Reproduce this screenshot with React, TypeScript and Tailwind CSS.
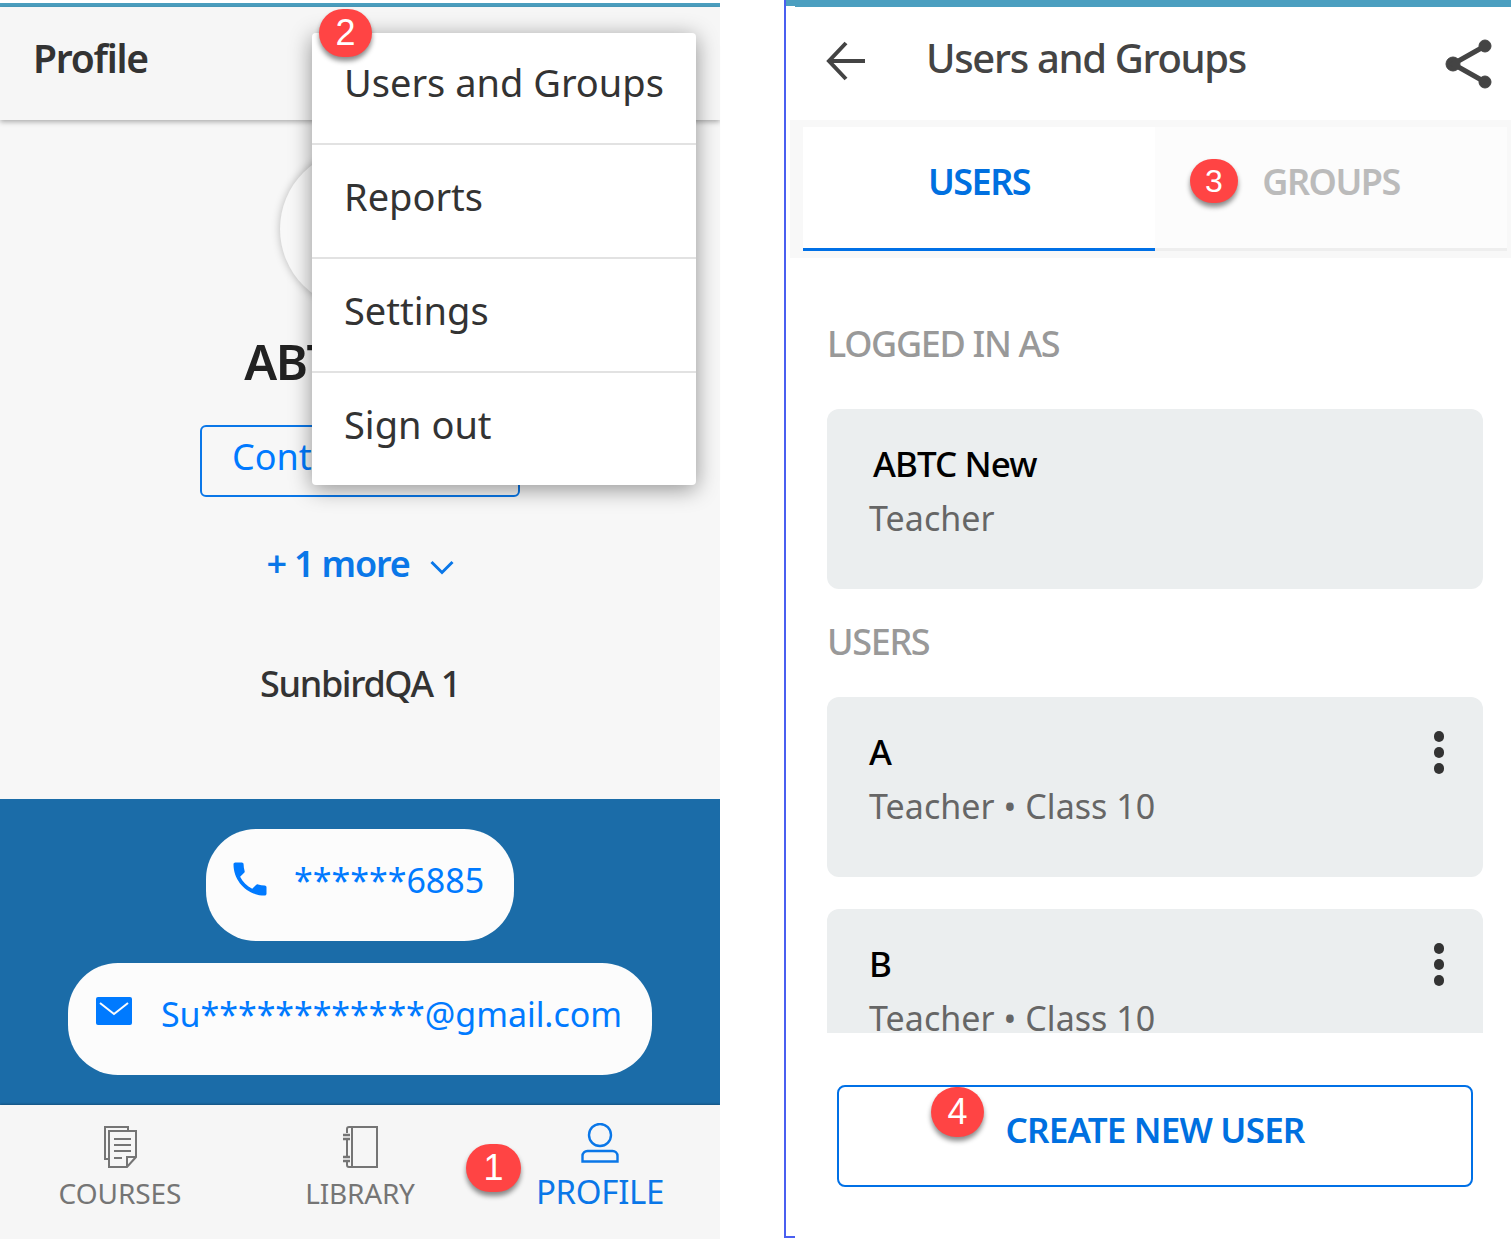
const Badge = ({ n, className }: { n: number; className: string }) => (
  <div className={`absolute flex items-center justify-center rounded-full bg-[#ff4444] text-white font-['Liberation_Sans',sans-serif] shadow-[0_4px_5px_rgba(0,0,0,0.45)] ${className}`}>
    {n}
  </div>
)

const CoursesIcon = () => (
  <svg width="34" height="42" viewBox="0 0 34 42" fill="none" stroke="#757575" strokeWidth="2">
    <path d="M25 4V1H2v32h4" />
    <path d="M6 5h27v26l-9 10H6z" />
    <path d="M33 31h-9v10" />
    <path d="M11 13h17M11 19h17M11 25h17M11 32h8" strokeWidth="2.2" />
  </svg>
)

const LibraryIcon = () => (
  <svg width="36" height="42" viewBox="0 0 36 42" fill="none" stroke="#757575" strokeWidth="2">
    <path d="M5 7V3a2 2 0 0 1 2-2h28v40H7a2 2 0 0 1-2-2v-4" />
    <path d="M5 13v18M10 1v40" />
    <path d="M1 9h7M1 13h7M1 31h7M1 35h7" strokeWidth="2.5" />
  </svg>
)

const ProfileIcon = () => (
  <svg width="38" height="40" viewBox="0 0 38 40" fill="none" stroke="#0a77e8" strokeWidth="2.4">
    <ellipse cx="19" cy="12" rx="11" ry="11" />
    <path d="M1.5 38.5V33a5 5 0 0 1 5-5h25a5 5 0 0 1 5 5v5.5z" />
  </svg>
)

const DotsIcon = () => (
  <div className="flex flex-col gap-[5px]">
    <div className="w-[10px] h-[11px] rounded-full bg-[#333]" />
    <div className="w-[10px] h-[11px] rounded-full bg-[#333]" />
    <div className="w-[10px] h-[11px] rounded-full bg-[#333]" />
  </div>
)

const UserCard = ({ name, sub, menu, className }: { name: string; sub: string; menu?: boolean; className: string }) => (
  <div className={`relative bg-[#ebeeef] rounded-t-[12px] overflow-hidden pl-[42px] pt-[34px] ${className}`}>
    <div className="text-[35px] leading-[42px] font-medium text-black tracking-[-0.9px]">{name}</div>
    <div className="text-[34px] leading-[46px] mt-[10px] text-[#666] tracking-[0.05px]">{sub}</div>
    {menu && (
      <div className="absolute right-[39px] top-[34px]">
        <DotsIcon />
      </div>
    )}
  </div>
)

export default function App() {
  return (
    <div className="relative w-[1511px] h-[1240px] bg-white font-['Noto_Sans',sans-serif] overflow-hidden flex">
      {/* Profile screen */}
      <div className="w-[720px] h-[1239px] pt-[3px] flex flex-col overflow-hidden">
        <div className="h-[4px] bg-[#4b9fc0]" />
        <div className="relative z-10 h-[113px] bg-[#f6f6f6] shadow-[0_2px_5px_rgba(0,0,0,0.3)] pl-[33px] pt-[26px]">
          <div className="text-[39px] leading-[50px] font-semibold text-[#333] tracking-[-1.25px]">Profile</div>
        </div>
        <div className="h-[679px] bg-[#f7f7f7] flex flex-col items-center">
          <div className="w-[160px] h-[160px] mt-[29px] rounded-full bg-[#f8f8f8] shadow-[0_0_8px_rgba(0,0,0,0.25)] shrink-0" />
          <div className="mt-[22px] text-[49px] leading-[60px] font-semibold text-[#222] tracking-[-1.5px]">ABTC New</div>
          <div className="mt-[34px] w-[320px] h-[72px] border-2 border-[#0a77e8] rounded-[6px] pl-[30px] pb-[9px] flex items-center text-[36px] text-[#007aff]">
            Content
          </div>
          <div className="mt-[42px] flex items-center text-[36px] leading-[50px] font-semibold text-[#0a77e8] tracking-[-1.2px]">
            + 1 more
            <svg className="ml-[20px] mt-[6px]" width="24" height="16" viewBox="0 0 24 16" fill="none" stroke="#0a77e8" strokeWidth="3">
              <path d="M1.5 3L12 13.5L22.5 3" />
            </svg>
          </div>
          <div className="mt-[73px] text-[36px] leading-[44px] font-medium text-[#333] tracking-[-1.36px]">SunbirdQA 1</div>
        </div>
        <div className="h-[306px] bg-[#1b6ca8] flex flex-col items-center pt-[30px] gap-[22px]">
          <div className="w-[308px] h-[112px] rounded-[50px] bg-[#fcfcfc] flex pl-[22px] pt-[28px] text-[34px] leading-[40px] text-[#007aff]">
            <svg width="44" height="44" viewBox="0 0 24 24" fill="#007aff">
              <path d="M6.62 10.79c1.44 2.83 3.76 5.14 6.59 6.59l2.2-2.2c.27-.27.67-.36 1.02-.24 1.12.37 2.33.57 3.57.57.55 0 1 .45 1 1V20c0 .55-.45 1-1 1C10.61 21 3 13.39 3 4c0-.55.45-1 1-1h3.5c.55 0 1 .45 1 1 0 1.25.2 2.45.57 3.57.11.35.03.74-.25 1.02z" />
            </svg>
            <span className="ml-[22px] mt-[3px]">******6885</span>
          </div>
          <div className="w-[584px] h-[112px] rounded-[50px] bg-[#fcfcfc] flex pl-[28px] pt-[31px] text-[34px] leading-[40px] text-[#007aff]">
            <svg className="mt-[2px]" width="36" height="30" viewBox="0 0 36 30">
              <rect width="36" height="28" y="1" rx="2" fill="#007aff" />
              <path d="M4 7l14 11L32 7" fill="none" stroke="#fcfcfc" strokeWidth="2" />
            </svg>
            <span className="ml-[29px] tracking-[-0.05px]">Su************@gmail.com</span>
          </div>
        </div>
        <div className="h-[134px] bg-[#f6f6f6] grid grid-cols-3 shadow-[0_-1px_2px_rgba(0,0,0,0.25)] relative">
          <div className="flex flex-col items-center pt-[21px]">
            <CoursesIcon />
            <div className="mt-[5px] text-[28px] leading-[40px] text-[#757575] tracking-[-0.05px]">COURSES</div>
          </div>
          <div className="flex flex-col items-center pt-[21px]">
            <LibraryIcon />
            <div className="mt-[5px] text-[28px] leading-[40px] text-[#757575] tracking-[-0.2px]">LIBRARY</div>
          </div>
          <div className="flex flex-col items-center pt-[18px]">
            <ProfileIcon />
            <div className="mt-[7px] text-[33px] leading-[44px] text-[#0a77e8] tracking-[-0.3px]">PROFILE</div>
          </div>
        </div>
      </div>

      {/* Overflow menu */}
      <div className="absolute z-20 left-[312px] top-[33px] w-[384px] h-[452px] bg-white rounded-[4px] shadow-[0_4px_22px_rgba(0,0,0,0.42)] flex flex-col text-[38px] text-[#333]">
        <div className="h-[110px] pl-[32px] pt-[22px] leading-[54px]">Users and Groups</div>
        <div className="h-[114px] border-t-2 border-[#e2e2e2] pl-[32px] pt-[24px] leading-[54px]">Reports</div>
        <div className="h-[114px] border-t-2 border-[#e2e2e2] pl-[32px] pt-[24px] leading-[54px]">Settings</div>
        <div className="h-[114px] border-t-2 border-[#e2e2e2] pl-[32px] pt-[24px] leading-[54px]">Sign out</div>
      </div>

      {/* Users and Groups screen */}
      <div className="ml-[64px] w-[727px] h-[1238px] border-l-2 border-[#4a5ff0] flex flex-col">
        <div className="h-[6px] bg-[#4b9fc0] shrink-0" />
        <div className="h-[1px] ml-[9px] bg-[#4b9fc0] shrink-0" />
        <div className="h-[113px] flex items-center pl-[40px] pr-[18px] shrink-0">
          <svg width="40" height="40" viewBox="0 0 40 40" fill="none" stroke="#444" strokeWidth="4" className="mb-[6px]">
            <path d="M39 20H3M20 2L3 20l17 18" />
          </svg>
          <div className="ml-[60px] flex-1 text-[40px] leading-[50px] font-medium text-[#444] tracking-[-1.3px] mb-[12px]">Users and Groups</div>
          <svg width="48" height="50" viewBox="0 0 48 50" fill="#444" stroke="#444" className="mt-[1px]">
            <circle cx="40" cy="7" r="6" />
            <circle cx="8" cy="25" r="7" />
            <circle cx="40" cy="43" r="6" />
            <path d="M40 7L8 25l32 18" fill="none" strokeWidth="5" />
          </svg>
        </div>
        <div className="h-[138px] ml-[4px] bg-[#f8f8f8] pl-[13px] pr-[4px] pt-[7px] shrink-0">
          <div className="flex h-[124px]">
            <div className="w-[352px] bg-white border-b-[3px] border-[#0070e6] flex items-center justify-center text-[36px] font-semibold text-[#0070e0] tracking-[-1.5px] pb-[11px]">
              USERS
            </div>
            <div className="w-[352px] bg-[#fcfcfc] border-b-[3px] border-[#eee] flex items-center justify-center text-[36px] font-semibold text-[#bbb] tracking-[-1.5px] pb-[11px]">
              GROUPS
            </div>
          </div>
        </div>
        <div className="h-[775px] pl-[41px] pr-[28px] shrink-0 overflow-hidden">
          <div className="pt-[61px] h-[151px] text-[36px] leading-[50px] font-medium text-[#999] tracking-[-1.33px]">LOGGED IN AS</div>
          <UserCard name="ABTC New" sub="Teacher" className="h-[180px] rounded-b-[12px] [&>div:first-child]:ml-[4px]" />
          <div className="pt-[28px] h-[108px] text-[36px] leading-[50px] font-medium text-[#999] tracking-[-1.33px]">USERS</div>
          <UserCard name="A" sub="Teacher • Class 10" menu className="h-[180px] rounded-b-[12px]" />
          <UserCard name="B" sub="Teacher • Class 10" menu className="mt-[32px] h-[124px]" />
        </div>
        <div className="pl-[51px] pr-[38px] pt-[52px]">
          <div className="h-[102px] border-2 border-[#0070e6] rounded-[8px] flex items-center justify-center text-[35px] font-semibold text-[#0070e0] tracking-[-0.8px] pb-[12px]">
            CREATE NEW USER
          </div>
        </div>
      </div>
      <div className="absolute left-[784px] top-[1236px] w-[11px] h-[2px] bg-[#4a5ff0]" />

      {/* Step badges */}
      <Badge n={1} className="z-30 left-[466px] top-[1144px] w-[55px] h-[48px] text-[36px]" />
      <Badge n={2} className="z-30 left-[319px] top-[9px] w-[53px] h-[48px] text-[36px]" />
      <Badge n={3} className="z-30 left-[1190px] top-[159px] w-[48px] h-[44px] text-[32px]" />
      <Badge n={4} className="z-30 left-[931px] top-[1087px] w-[53px] h-[50px] text-[36px]" />
    </div>
  )
}
